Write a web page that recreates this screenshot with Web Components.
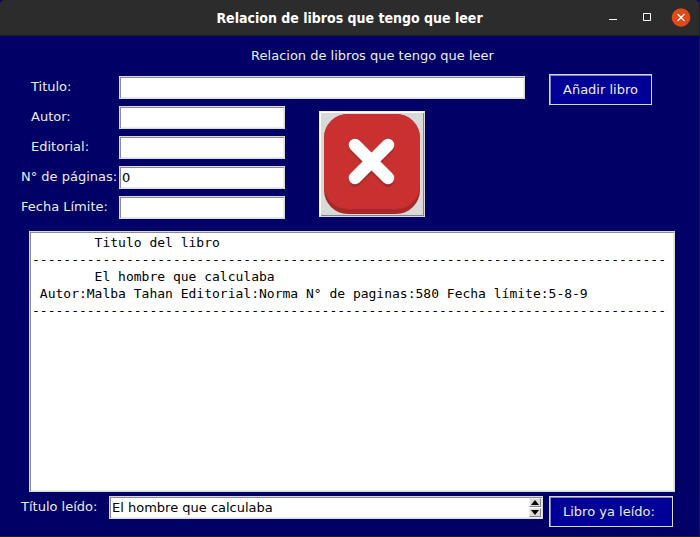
<!DOCTYPE html>
<html lang="es">
<head>
<meta charset="utf-8">
<title>Relacion de libros que tengo que leer</title>
<style>
html, body { margin: 0; height: 100%; }
body { background: #000066; font: 13px/16px "DejaVu Sans", sans-serif; color: #ececec; }
</style>
</head>
<body>
<book-window></book-window>
<script>
const FIELD_CSS = `
  input { font: inherit; font-size: 13px; color: #000; background: #fff; box-sizing: border-box; width: 0; min-width: 0;
    height: 23px; padding: 0 2px; border: 1px solid #d9d9d9; border-radius: 0; outline: none;
    box-shadow: inset 1px 1px #8c8c8c, inset -1px -1px #ececec; }
  label { white-space: nowrap; padding-bottom: 2px; box-sizing: border-box; }`;

function define(name, html, setup) {
  customElements.define(name, class extends HTMLElement {
    connectedCallback() {
      if (this.shadowRoot) return;
      this.attachShadow({ mode: 'open' }).innerHTML = html;
      if (setup) setup(this, this.shadowRoot);
    }
  });
}

define('title-bar', `
<style>
  :host { display: grid; grid-template-columns: 1fr auto 1fr; align-items: center; height: 36px; flex: none;
    background: #2c2c2c; border-bottom: 1px solid #1f1f1f; box-sizing: border-box; border-radius: 4px 4px 0 0; }
  h1 { grid-column: 2; margin: 0; font: bold 14px/20px "DejaVu Sans Condensed", sans-serif; color: #fff; white-space: nowrap; }
  div { display: flex; justify-content: flex-end; align-items: center; gap: 14px; padding-right: 8px; }
  button { width: 20px; height: 20px; padding: 0; border: 0; background: none; display: block; }
  svg { display: block; }
</style>
<h1><slot></slot></h1>
<div>
  <button aria-label="Minimizar"><svg width="20" height="20"><path d="M6 11.500h8" stroke="#fff"/></svg></button>
  <button aria-label="Maximizar"><svg width="20" height="20"><path d="M6.500 5.500h7v7h-7z" fill="none" stroke="#fff"/></svg></button>
  <button aria-label="Cerrar"><svg width="20" height="20"><circle cx="10" cy="9.500" r="9.300" fill="#e14a18"/><path d="M6.500 6l7 7m0-7l-7 7" stroke="#fff" stroke-width="1.300"/></svg></button>
</div>`);

define('form-field', `
<style>
  :host { display: flex; align-items: center; height: 23px; }
  label { width: 98px; flex: none; }
  :host([indent]) label { padding-left: 10px; }
  ${FIELD_CSS}
  input { flex: 1; }
</style>
<label for="f"></label><input id="f" type="text">`, (el, root) => {
  root.querySelector('label').textContent = el.getAttribute('label');
  root.querySelector('input').value = el.getAttribute('value') || '';
});

define('action-button', `
<style>
  :host { display: block; }
  button { display: block; font: inherit; color: #ececec; background: #000099; height: 31px; width: 100%; margin: 0;
    padding: 0 13px; text-align: left; white-space: nowrap; border: 1px solid #d9d9d9; border-radius: 0;
    box-shadow: inset 1px 1px #8080c0; }
</style>
<button type="button"><slot></slot></button>`);

define('delete-button', `
<style>
  :host { display: block; }
  button { display: block; width: 106px; height: 106px; padding: 0; background: #d9d9d9; border: 1px solid;
    border-color: #ececec #d9d9d9 #d9d9d9 #ececec; border-radius: 0;
    box-shadow: inset 1px 1px #fff, inset -1px -1px #828282; }
  svg { display: block; margin: 0 4px; }
</style>
<button type="button" aria-label="Borrar">
  <svg width="96" height="100" viewBox="0 0 96 100">
    <rect width="96" height="100" rx="24" fill="#a92828"/>
    <rect width="96" height="95" rx="24" fill="#c93131"/>
    <path d="M31 34l33 33m0-33l-33 33" stroke="#a92828" stroke-width="12" stroke-linecap="round"/>
    <path d="M31 31l33 33m0-33l-33 33" stroke="#fff" stroke-width="12.500" stroke-linecap="round"/>
  </svg>
</button>`);

define('book-list', `
<style>
  :host { display: block; background: #fff; color: #000; overflow: hidden; border: 1px solid #d9d9d9;
    box-shadow: inset 1px 1px #8c8c8c, inset -1px -1px #ececec; padding: 2px; }
  pre { margin: 0; font: 13px/17px "DejaVu Sans Mono", monospace; }
</style>
<pre></pre>`, (el, root) => {
  const rule = '-'.repeat(81);
  const lines = ['        Titulo del libro', rule];
  for (const b of [{ t: 'El hombre que calculaba', a: 'Malba Tahan', e: 'Norma', n: 580, f: '5-8-9' }])
    lines.push('        ' + b.t, ` Autor:${b.a} Editorial:${b.e} N° de paginas:${b.n} Fecha límite:${b.f}`, rule);
  root.querySelector('pre').textContent = lines.join('\n');
});

define('title-spinner', `
<style>
  :host { display: flex; align-items: center; height: 23px; }
  label { width: 88px; flex: none; }
  .box { flex: 1; display: flex; height: 23px; box-sizing: border-box; background: #fff; border: 1px solid #d9d9d9;
    box-shadow: inset 1px 1px #8c8c8c, inset -1px -1px #ececec; padding: 1px; }
  ${FIELD_CSS}
  .box input { flex: 1; height: 19px; border: 0; padding: 0 1px; box-shadow: none; }
  .arrows { display: grid; grid-template-rows: 9px 9px; gap: 1px; }
  button { width: 12px; height: 9px; padding: 0; border: 1px solid; border-color: #eee #828282 #828282 #eee;
    border-radius: 0; background: #d9d9d9; display: block; }
  svg { display: block; }
</style>
<label for="s">Título leído:</label>
<div class="box"><input id="s" type="text" value="El hombre que calculaba">
  <div class="arrows">
    <button type="button" aria-label="Anterior"><svg width="10" height="7"><path d="M1 6h8L5 1z"/></svg></button>
    <button type="button" aria-label="Siguiente"><svg width="10" height="7"><path d="M1 1h8L5 6z"/></svg></button>
  </div>
</div>`);

define('book-window', `
<style>
  :host { display: flex; flex-direction: column; min-height: 100vh; box-sizing: border-box;
    background: #000066; border: solid #1f1f1f; border-width: 0 1px 1px 0; }
  main { flex: 1; display: flex; flex-direction: column; padding: 0 24px 9px 21px; }
  h2 { margin: 0; padding: 12px 0 10px 49px; font: inherit; text-align: center; }
  .form { display: grid; grid-template-columns: 1fr 124px; column-gap: 24px; align-items: start; padding-right: 2px; }
  .fields { display: grid; gap: 7px; padding-top: 2px; }
  .lower { display: grid; grid-template-columns: 264px 1fr; column-gap: 34px; }
  .stack { display: grid; gap: 7px; }
  delete-button { padding-top: 5px; }
  .add { justify-self: start; }
  book-list { flex: 1; margin: 12px 0 4px 8px; }
  .done { display: grid; grid-template-columns: 1fr 124px; gap: 6px; align-items: start; padding-right: 2px; }
</style>
<title-bar>Relacion de libros que tengo que leer</title-bar>
<main>
  <h2>Relacion de libros que tengo que leer</h2>
  <div class="form">
    <div class="fields">
      <form-field label="Titulo:" indent></form-field>
      <div class="lower">
        <div class="stack">
          <form-field label="Autor:" indent></form-field>
          <form-field label="Editorial:" indent></form-field>
          <form-field label="N° de páginas:" value="0"></form-field>
          <form-field label="Fecha Límite:"></form-field>
        </div>
        <delete-button></delete-button>
      </div>
    </div>
    <action-button class="add">Añadir libro</action-button>
  </div>
  <book-list></book-list>
  <div class="done">
    <title-spinner></title-spinner>
    <action-button>Libro ya leído:</action-button>
  </div>
</main>`);
</script>
</body>
</html>
